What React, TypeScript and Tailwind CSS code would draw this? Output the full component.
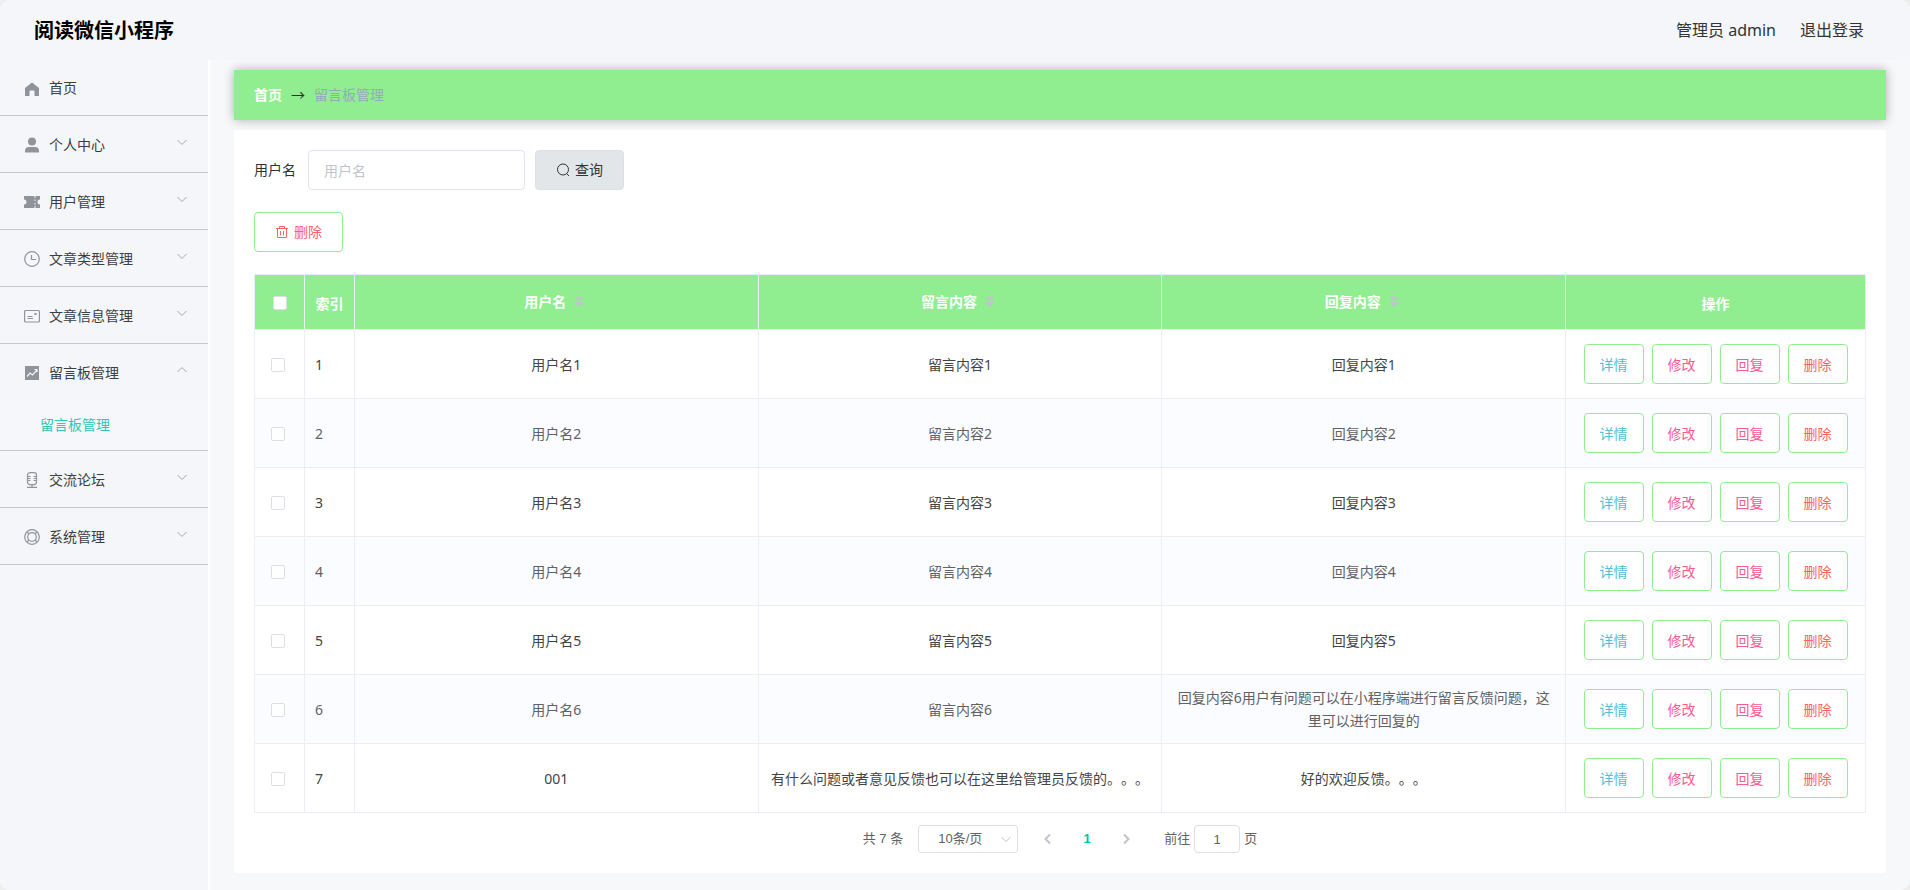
import React, { useState } from 'react';

type IconName = 'home' | 'user' | 'ticket' | 'clock' | 'postcard' | 'chart' | 'mic' | 'help';

interface MenuItem {
  title: string;
  icon: IconName;
  children?: string[];
}

interface MessageRow {
  id: number;
  username: string;
  content: string;
  reply: string;
}

const menus: MenuItem[] = [
  { title: '个人中心', icon: 'user', children: ['修改密码', '个人信息'] },
  { title: '用户管理', icon: 'ticket', children: ['用户管理'] },
  { title: '文章类型管理', icon: 'clock', children: ['文章类型管理'] },
  { title: '文章信息管理', icon: 'postcard', children: ['文章信息管理'] },
  { title: '留言板管理', icon: 'chart', children: ['留言板管理'] },
  { title: '交流论坛', icon: 'mic', children: ['交流论坛'] },
  { title: '系统管理', icon: 'help', children: ['轮播图管理'] },
];

const rows: MessageRow[] = [
  { id: 1, username: '用户名1', content: '留言内容1', reply: '回复内容1' },
  { id: 2, username: '用户名2', content: '留言内容2', reply: '回复内容2' },
  { id: 3, username: '用户名3', content: '留言内容3', reply: '回复内容3' },
  { id: 4, username: '用户名4', content: '留言内容4', reply: '回复内容4' },
  { id: 5, username: '用户名5', content: '留言内容5', reply: '回复内容5' },
  {
    id: 6,
    username: '用户名6',
    content: '留言内容6',
    reply: '回复内容6用户有问题可以在小程序端进行留言反馈问题，这里可以进行回复的',
  },
  { id: 7, username: '001', content: '有什么问题或者意见反馈也可以在这里给管理员反馈的。。。', reply: '好的欢迎反馈。。。' },
];

const actions = [
  { label: '详情', color: 'text-[#4fc1d3]' },
  { label: '修改', color: 'text-[#fb5a92]' },
  { label: '回复', color: 'text-[#fb5a92]' },
  { label: '删除', color: 'text-[#ff6464]' },
];

const checkboxClass =
  'block size-3.5 appearance-none rounded-xs border border-[#dcdfe6] bg-white checked:border-[#409eff] checked:bg-[#409eff]';

const iconShapes: Record<IconName, React.ReactNode> = {
  home: <path fill="currentColor" d="M8 1.500 15 7v8h-4.500v-4.500q0-1-1-1h-3q-1 0-1 1V15H1V7z" />,
  user: (
    <g fill="currentColor">
      <circle cx="8" cy="4.500" r="4" />
      <path d="M1 15.500V14q0-4 4-4h6q4 0 4 4v1.500z" />
    </g>
  ),
  ticket: (
    <g fill="currentColor">
      <path d="M0 2h10.500v2h1V2H16v3.500a2.500 2.500 0 0 0 0 5V14h-4.500v-2h-1v2H0v-3.500a2.500 2.500 0 0 0 0-5z" />
      <path fill="#f4f6fa" d="M10.500 5.500h1v1.500h-1zM10.500 9h1v1.500h-1z" />
    </g>
  ),
  clock: (
    <g fill="none" stroke="currentColor" strokeWidth="1.200">
      <circle cx="8" cy="8" r="7.300" />
      <path d="M7.500 4v4.500H12" />
    </g>
  ),
  postcard: (
    <g fill="none" stroke="currentColor" strokeWidth="1.200">
      <rect x=".6" y="2.500" width="14.800" height="11.500" rx="1" />
      <path d="M3.500 8.500h5M3.500 10.500h5.500" />
      <path fill="currentColor" stroke="none" d="M10.500 5h2v2h-2z" />
    </g>
  ),
  chart: (
    <g>
      <path fill="currentColor" d="M1 1h14v14H1z" />
      <path fill="none" stroke="#f4f6fa" strokeWidth="1.200" d="m3 11.500 3-3.500 2.500 2L13 5M10.500 4.500H13V7" />
    </g>
  ),
  mic: (
    <g fill="none" stroke="currentColor" strokeWidth="1.200">
      <rect x="3.500" y=".6" width="9" height="12" rx="2.500" />
      <path d="M4 4.500h2.500M4 6.500h2.500M4 8.500h2.500M9.500 4.500H12M9.500 6.500H12M9.500 8.500H12M8 12.500v3M3 15.400h10" />
    </g>
  ),
  help: (
    <g fill="none" stroke="currentColor" strokeWidth="1.200">
      <circle cx="8" cy="8" r="7.300" />
      <circle cx="8" cy="8" r="4.300" />
      <path d="m5 5-2.300-2.300M11 5l2.300-2.300M5 11l-2.300 2.300M11 11l2.300 2.300" />
    </g>
  ),
};

const MenuIcon: React.FC<{ name: IconName }> = ({ name }) => (
  <svg viewBox="0 0 16 16" className="mt-0.5 size-4 shrink-0 text-[#909399]" aria-hidden="true">
    {iconShapes[name]}
  </svg>
);

const Chevron: React.FC<{ className?: string; d?: string }> = ({ className = '', d = 'm1.500 4 4.500 4.500L10.500 4' }) => (
  <svg viewBox="0 0 12 12" className={`size-3 shrink-0 ${className}`} fill="none" stroke="currentColor" aria-hidden="true">
    <path d={d} />
  </svg>
);

const SortCaret: React.FC = () => (
  <svg viewBox="0 0 10 12" className="mr-1 ml-2 h-3 w-2.5 text-[#c0c4cc]" fill="currentColor" aria-hidden="true">
    <path d="M.5 5h9L5 0zM.5 7h9L5 12z" />
  </svg>
);

const Sidebar: React.FC = () => {
  const [opened, setOpened] = useState('留言板管理');

  return (
    <aside className="w-[210px] shrink-0 border-r-2 border-white bg-[#f4f6fa]">
      <nav className="text-sm text-[#3c3e42]">
        <a href="#home" className="flex h-14 items-center gap-[9px] border-b border-[#c8c9cc] pl-6">
          <MenuIcon name="home" />
          首页
        </a>
        {menus.map((menu) => {
          const isOpen = opened === menu.title;
          return (
            <div key={menu.title} className="border-b border-[#c8c9cc]">
              <button
                type="button"
                aria-expanded={isOpen}
                onClick={() => setOpened(isOpen ? '' : menu.title)}
                className="flex h-14 w-full items-center gap-[9px] pr-5 pl-6 text-left"
              >
                <MenuIcon name={menu.icon} />
                <span className="flex-1 pt-px">{menu.title}</span>
                <Chevron className={isOpen ? 'mb-1 rotate-180 text-[#a4a7ad]' : 'mb-1 text-[#a4a7ad]'} />
              </button>
              {isOpen &&
                menu.children?.map((child) => (
                  <a
                    key={child}
                    href="#board"
                    className="flex h-[50px] items-center bg-[#f5f7fa] pl-10 text-[#2fc9b8]"
                  >
                    {child}
                  </a>
                ))}
            </div>
          );
        })}
      </nav>
    </aside>
  );
};

const SearchForm: React.FC = () => {
  const [keyword, setKeyword] = useState('');

  return (
    <form className="flex items-center gap-2.5 text-sm" onSubmit={(event) => event.preventDefault()}>
      <label htmlFor="username" className="pr-0.5 text-[#303133]">
        用户名
      </label>
      <input
        id="username"
        type="text"
        value={keyword}
        onChange={(event) => setKeyword(event.target.value)}
        placeholder="用户名"
        className="h-10 w-[217px] rounded border border-[#dfe4ed] bg-white px-[15px] outline-none placeholder:text-[#c0c4cc]"
      />
      <button
        type="submit"
        className="flex h-10 items-center gap-[5px] rounded border border-[#dcdfe6] bg-[#e2e6e9] px-5 text-[#333]"
      >
        <svg viewBox="0 0 14 14" className="size-3.5" fill="none" stroke="currentColor" aria-hidden="true">
          <circle cx="7" cy="6.500" r="5.500" />
          <path d="m10.500 10.500 2.500 2.500" />
        </svg>
        查询
      </button>
    </form>
  );
};

const MessageTable: React.FC = () => (
  <table className="w-full table-fixed border-collapse text-sm leading-[23px] [text-spacing-trim:space-all]">
    <colgroup>
      <col className="w-[50px]" />
      <col className="w-[50px]" />
      <col />
      <col />
      <col />
      <col className="w-[300px]" />
    </colgroup>
    <thead>
      <tr className="h-[55px] bg-[#90ee90] text-white">
        <th className="border border-[#ebeef5] pt-0.5">
          <input type="checkbox" aria-label="全选" className={`mx-auto ${checkboxClass}`} />
        </th>
        <th className="border border-[#ebeef5] pt-0.5">索引</th>
        {['用户名', '留言内容', '回复内容'].map((title) => (
          <th key={title} className="border border-[#ebeef5]">
            <button type="button" className="mb-0.5 inline-flex items-center align-middle font-bold">
              {title}
              <SortCaret />
            </button>
          </th>
        ))}
        <th className="border border-[#ebeef5] pt-0.5">操作</th>
      </tr>
    </thead>
    <tbody>
      {rows.map((row) => (
        <tr key={row.id} className="h-[69px] text-[#444] even:bg-[#fafcff] even:text-[#606266]">
          <td className="border border-[#ebeef5] pt-px pl-4">
            <input type="checkbox" aria-label={`选择第${row.id}行`} className={checkboxClass} />
          </td>
          <td className="border border-[#ebeef5] pl-2.5">{row.id}</td>
          <td className="border border-[#ebeef5] px-2.5 text-center">{row.username}</td>
          <td className="border border-[#ebeef5] px-2.5 text-center">{row.content}</td>
          <td className="border border-[#ebeef5] px-2.5 text-center">{row.reply}</td>
          <td className="border border-[#ebeef5]">
            <div className="flex justify-center gap-2">
              {actions.map((action) => (
                <button
                  key={action.label}
                  type="button"
                  className={`h-10 w-15 rounded border border-[#90ee90] bg-white ${action.color}`}
                >
                  {action.label}
                </button>
              ))}
            </div>
          </td>
        </tr>
      ))}
    </tbody>
  </table>
);

const Pagination: React.FC = () => {
  const [page, setPage] = useState('1');

  return (
    <div className="flex items-center justify-center pt-3 pb-5 font-['Liberation_Sans','Noto_Sans_CJK_SC',sans-serif] text-[13px] text-[#606266]">
      <span>共 7 条</span>
      <div className="relative ml-[15px]">
        <select
          aria-label="每页条数"
          className="block h-7 w-[100px] appearance-none rounded-[3px] border border-[#dcdfe6] bg-white pl-[19px] outline-none"
        >
          <option>10条/页</option>
          <option>20条/页</option>
        </select>
        <Chevron className="pointer-events-none absolute top-2 right-1.5 text-[#c0c4cc]" />
      </div>
      <button type="button" aria-label="上一页" className="ml-6 text-[#c0c4cc]">
        <Chevron d="M8 1.500 3.500 6 8 10.500" className="stroke-2" />
      </button>
      <button type="button" className="w-[66px] text-center font-bold text-[#00c3a5]">
        1
      </button>
      <button type="button" aria-label="下一页" className="text-[#c0c4cc]">
        <Chevron d="M4 1.500 8.500 6 4 10.500" className="stroke-2" />
      </button>
      <label className="ml-8 flex items-center gap-1">
        前往
        <input
          type="text"
          value={page}
          onChange={(event) => setPage(event.target.value)}
          className="h-7 w-[46px] rounded border border-[#dcdfe6] bg-white text-center outline-none"
        />
        页
      </label>
    </div>
  );
};

const App: React.FC = () => {
  return (
    <div className="bg-[#eeeeee]">
      <div className="flex min-h-screen flex-col overflow-hidden rounded-[10px] bg-[#f7f8fa] font-['Noto_Sans','Noto_Sans_CJK_SC',sans-serif]">
        <header className="flex h-15 items-center justify-between bg-[#f4f6fa] pr-[46px] pl-[34px]">
          <h1 className="pt-0.5 text-xl font-bold text-black">阅读微信小程序</h1>
          <div className="flex items-center gap-6 text-base text-[#333]">
            <span>管理员 admin</span>
            <a href="#logout">退出登录</a>
          </div>
        </header>
        <div className="flex flex-1">
          <Sidebar />
          <main className="min-w-0 flex-1 px-6 pt-2.5 pb-4">
            <div className="flex h-[50px] items-center gap-[9px] bg-[#90ee90] px-5 text-sm shadow-[0_0_10px_rgba(0,0,0,0.3)]">
              <a href="#home" className="font-bold text-white">
                首页
              </a>
              <span className="text-[#303133]">→</span>
              <span className="text-[#97a8be]">留言板管理</span>
            </div>
            <section className="mt-2.5 bg-white px-5 pt-5">
              <SearchForm />
              <button
                type="button"
                className="my-[22px] flex h-10 items-center gap-[5px] rounded border border-[#90ee90] bg-white px-5 text-sm text-[#ff6464]"
              >
                <svg viewBox="0 0 14 14" className="size-3.5" fill="none" stroke="currentColor" aria-hidden="true">
                  <path d="M1 3.500h12M4.500 3.500v-2h5v2M2.500 3.500v9h9v-9M5.500 6v4.500M8.500 6v4.500" />
                </svg>
                删除
              </button>
              <MessageTable />
              <Pagination />
            </section>
          </main>
        </div>
      </div>
    </div>
  );
};

export default App;
